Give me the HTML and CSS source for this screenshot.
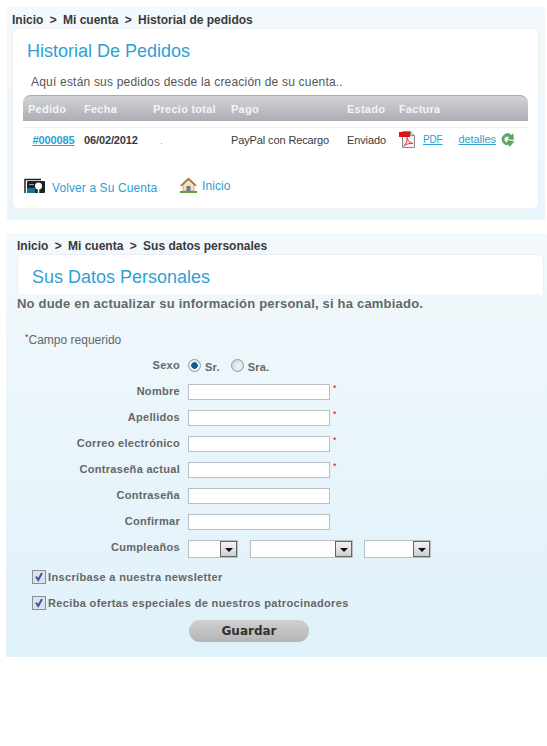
FILE: index.html
```html
<!DOCTYPE html>
<html lang="es">
<head>
  <meta charset="UTF-8" />
  <title>Mi cuenta</title>
  <link rel="stylesheet" href="styles.css">
</head>
<body>
  <section class="block orders">
    <div class="crumbs">Inicio <b>&gt;</b> Mi cuenta <b>&gt;</b> Historial de pedidos</div>
    <div class="card">
      <h1>Historial De Pedidos</h1>
      <p class="intro">Aquí están sus pedidos desde la creación de su cuenta..</p>

      <table class="order-table">
        <thead>
          <tr>
            <th class="c-id">Pedido</th>
            <th class="c-date">Fecha</th>
            <th class="c-price">Precio total</th>
            <th class="c-pay">Pago</th>
            <th class="c-state">Estado</th>
            <th class="c-bill">Factura</th>
          </tr>
        </thead>
        <tbody>
          <tr class="gap"><td colspan="6"></td></tr>
          <tr>
            <td class="order-no"><a href="#">#000085</a></td>
            <td class="order-date">06/02/2012</td>
            <td><span class="speck"></span></td>
            <td>PayPal con Recargo</td>
            <td>Enviado</td>
            <td>
              <div class="bill">
                <svg class="pdf-icon" width="17" height="17" viewBox="0 0 17 17">
                  <path d="M3.500 .5H11.500L15.500 4.500V16.500H3.500Z" fill="#f4f4f4" stroke="#8a8a8a"/>
                  <path d="M11.500 .5V4.500H15.500" fill="#d8d8d8" stroke="#8a8a8a"/>
                  <path d="M0 1H11V6H0Z" fill="#d8141a"/>
                  <path d="M4.500 15C7.500 13 8.500 9 8 6.500 8.500 9.500 10.500 12 14 12.500 10.500 12 7.500 13 4.500 15Z" fill="none" stroke="#e2363b"/>
                </svg>
                <a class="pdf-link" href="#">PDF</a>
                <a class="more-link" href="#">detalles</a>
                <svg class="redo-icon" width="13" height="15" viewBox="0 0 13 15">
                  <path d="M10.500 3.500A5.500 5.500 0 1 0 8 12.500L8.500 14.500 13 9.500 6.500 8.500 7 10.300A3 3 0 1 1 8.500 5.500L7 7 12.500 7.500 12 2Z" fill="#5fa862" stroke="#3f8a48" stroke-width=".5"/>
                </svg>
              </div>
            </td>
          </tr>
        </tbody>
      </table>

      <div class="card-links">
        <a class="account-link" href="#">
          <svg width="22" height="17" viewBox="0 0 22 17">
            <path d="M1 15V1.500H17" fill="none" stroke="#222" stroke-width="1.500"/>
            <rect x="3" y="3" width="18" height="12" rx="1" fill="#1d2226"/>
            <rect x="3" y="10" width="8" height="5" fill="#1f6f93"/>
            <rect x="5" y="6" width="5" height="1" fill="#9aa"/>
            <circle cx="14.500" cy="8" r="3.500" fill="#fff"/>
            <path d="M14.500 11V16.500M11 16.500H18" stroke="#fff" stroke-width="1.500"/>
          </svg>
          Volver a Su Cuenta
        </a>
        <a class="home-link" href="#">
          <svg width="17" height="16" viewBox="0 0 17 16">
            <path d="M3 8V14H14V8L8.500 2.500Z" fill="#f1e2c4" stroke="#b59a6a" stroke-width=".7"/>
            <path d="M0 8.500 8.500 .5 17 8.500 15 9 8.500 3 2 9Z" fill="#a8743a"/>
            <rect x="6.500" y="9" width="4" height="5" fill="#6f7a80"/>
            <rect x="0" y="14" width="17" height="2" fill="#5f9d46"/>
          </svg>
          Inicio
        </a>
      </div>
    </div>
  </section>

  <section class="block details">
    <div class="crumbs">Inicio <b>&gt;</b> Mi cuenta <b>&gt;</b> Sus datos personales</div>
    <div class="card card-top">
      <h1>Sus Datos Personales</h1>
    </div>
    <p class="lead">No dude en actualizar su información personal, si ha cambiado.</p>

    <form class="account-form">
      <p class="required-note"><i>*</i>Campo requerido</p>

      <div class="row row-sex">
        <label>Sexo</label>
        <div class="radios">
          <input type="radio" name="sexo" checked><span>Sr.</span>
          <input type="radio" name="sexo"><span>Sra.</span>
        </div>
      </div>
      <div class="row">
        <label for="nombre">Nombre</label>
        <input class="field" type="text" id="nombre"><i class="req">*</i>
      </div>
      <div class="row">
        <label for="apellidos">Apellidos</label>
        <input class="field" type="text" id="apellidos"><i class="req">*</i>
      </div>
      <div class="row">
        <label for="correo">Correo electrónico</label>
        <input class="field" type="text" id="correo"><i class="req">*</i>
      </div>
      <div class="row">
        <label for="actual">Contraseña actual</label>
        <input class="field" type="password" id="actual"><i class="req">*</i>
      </div>
      <div class="row">
        <label for="clave">Contraseña</label>
        <input class="field" type="password" id="clave">
      </div>
      <div class="row">
        <label for="confirmar">Confirmar</label>
        <input class="field" type="password" id="confirmar">
      </div>
      <div class="row row-date">
        <label>Cumpleaños</label>
        <div class="select sel-day"><span class="arrow"></span></div>
        <div class="select sel-month"><span class="arrow"></span></div>
        <div class="select sel-year"><span class="arrow"></span></div>
      </div>

      <div class="check-row first">
        <svg width="14" height="14" viewBox="0 0 14 14">
          <rect x=".5" y=".5" width="13" height="13" fill="#dfe3e6" stroke="#8a8f94"/>
          <path d="M4 6.500 6.200 10 10 3" fill="none" stroke="#3b55b5" stroke-width="2"/>
        </svg>
        <span>Inscríbase a nuestra newsletter</span>
      </div>
      <div class="check-row">
        <svg width="14" height="14" viewBox="0 0 14 14">
          <rect x=".5" y=".5" width="13" height="13" fill="#dfe3e6" stroke="#8a8f94"/>
          <path d="M4 6.500 6.200 10 10 3" fill="none" stroke="#3b55b5" stroke-width="2"/>
        </svg>
        <span>Reciba ofertas especiales de nuestros patrocinadores</span>
      </div>

      <button class="save-btn" type="submit">Guardar</button>
    </form>
  </section>
</body>
</html>
```

FILE: styles.css
```css
body {
  margin: 0;
  font-family: "Liberation Sans", Arial, sans-serif;
  font-size: 12px;
  color: #333;
  background: #fff;
}

a {
  color: #2c9fd3;
}

.block {
  box-sizing: border-box;
}

.orders {
  margin: 7px 2px 0 7px;
  height: 213px;
  padding: 0 6px 0 5px;
  background: linear-gradient(#f3f9fc, #e9f5fb);
}

.details {
  margin: 13px 0 0 6px;
  height: 424px;
  padding: 0 3px 0 11px;
  background: linear-gradient(#f3f9fc, #dff1fa);
}

.crumbs {
  height: 21px;
  line-height: 27px;
  font-weight: bold;
  font-size: 12px;
  color: #3a3a3a;
  white-space: nowrap;
}

.crumbs b {
  margin: 0 3px;
}

.card {
  box-sizing: border-box;
  height: 181px;
  background: #fff;
  border: 1px solid #eeeef2;
  border-radius: 6px;
}

.card-top {
  height: 40px;
  border-bottom: none;
  border-radius: 6px 6px 0 0;
}

h1 {
  margin: 12px 0 0 14px;
  font-size: 18px;
  font-weight: normal;
  line-height: 21px;
  color: #2f9fd4;
}

.intro {
  margin: 12px 0 0 18px;
  line-height: 16px;
  letter-spacing: .2px;
  color: #555;
}

.order-table {
  width: 505px;
  margin: 5px 0 0 10px;
  border-collapse: separate;
  border-spacing: 0;
  table-layout: fixed;
}

.order-table th {
  box-sizing: border-box;
  height: 26px;
  padding: 0 0 0 5px;
  text-align: left;
  font-size: 11px;
  color: #f4f4f6;
  letter-spacing: .25px;
  background: linear-gradient(#d2d3d7, #adaeb3);
  border-top: 1px solid #aaa;
}

.order-table th.c-id {
  border-radius: 8px 0 0 0;
}

.order-table th.c-bill {
  border-radius: 0 8px 0 0;
}

.c-id { width: 56px; }
.c-date { width: 69px; }
.c-price { width: 78px; }
.c-pay { width: 116px; }
.c-state { width: 52px; }

.order-table td {
  height: 23px;
  padding: 0 0 2px 5px;
  font-size: 11px;
  letter-spacing: -.12px;
  color: #3a3a3a;
  border-top: 1px solid #eee;
}

.order-table .gap td {
  height: 6px;
  padding: 0;
  border-top: none;
}

.order-no {
  font-weight: bold;
  text-align: center;
}

.order-date {
  font-weight: bold;
  color: #222;
}

.speck {
  display: inline-block;
  width: 1px;
  height: 1px;
  margin: 9px 0 0 8px;
  background: #e0a050;
}

.bill {
  display: flex;
  align-items: center;
}

.bill svg {
  flex-shrink: 0;
}

.pdf-link {
  margin: -1px 0 0 7px;
  font-size: 10px;
  letter-spacing: -.2px;
}

.more-link {
  margin: -2px 0 0 16px;
  letter-spacing: -.05px;
}

.redo-icon {
  margin-left: 5px;
}

.card-links {
  display: flex;
  align-items: flex-end;
  margin: 24px 0 0 11px;
  font-size: 12px;
}

.card-links a {
  display: flex;
  align-items: flex-end;
  text-decoration: none;
  letter-spacing: .1px;
}

.account-link {
  width: 156px;
}

.account-link svg {
  margin-right: 6px;
}

.home-link {
  margin-bottom: 2px;
}

.home-link svg {
  margin-right: 5px;
}

.lead {
  margin: 2px 0 0;
  font-weight: bold;
  font-size: 13px;
  line-height: 16px;
  letter-spacing: .2px;
  color: #666;
}

.required-note {
  margin: 20px 0 0 8px;
  line-height: 16px;
  color: #666;
}

.required-note i {
  font-style: normal;
  font-size: 9px;
  line-height: 9px;
  vertical-align: 4px;
  color: #e00;
}

.req {
  align-self: flex-start;
  margin: 6px 0 0 3px;
  font-size: 9px;
  font-style: normal;
  line-height: 9px;
  color: #e00;
}

.row {
  display: flex;
  align-items: center;
  height: 26px;
}

.row-sex {
  margin-top: 4px;
}

.row label {
  width: 163px;
  margin-right: 8px;
  text-align: right;
  font-size: 11px;
  font-weight: bold;
  letter-spacing: .3px;
  color: #666;
}

.radios {
  display: flex;
  align-items: center;
  font-size: 11px;
  font-weight: bold;
  letter-spacing: .2px;
  color: #666;
}

.radios input {
  appearance: none;
  box-sizing: border-box;
  width: 13px;
  height: 13px;
  margin: 0 4px 0 0;
  border: 1px solid #8a9aa5;
  border-radius: 50%;
  background: radial-gradient(circle at 60% 60%, #f4f4f4, #cfd2d4);
}

.radios input:checked {
  background: radial-gradient(circle, #0a5f95 0 3px, #eee 3.5px);
}

.radios span {
  margin: 3px 11px 0 0;
}

.field {
  box-sizing: border-box;
  width: 142px;
  height: 16px;
  margin-top: 2px;
  padding: 0;
  border: 1px solid #b8bec4;
  background: #fff;
  outline: none;
}

.select {
  box-sizing: border-box;
  display: flex;
  justify-content: flex-end;
  height: 18px;
  margin-top: 4px;
  border: 1px solid #b8bec4;
  background: #fff;
}

.sel-day { width: 50px; margin-right: 12px; }
.sel-month { width: 103px; margin-right: 11px; }
.sel-year { width: 67px; }

.arrow {
  box-sizing: border-box;
  position: relative;
  width: 17px;
  height: 16px;
  border: 1px solid #666;
  background: linear-gradient(#f4f4f4, #cfcfcf);
}

.arrow::after {
  content: "";
  position: absolute;
  left: 4px;
  top: 6px;
  border: 4px solid transparent;
  border-top-color: #111;
  border-bottom: none;
}

.check-row {
  display: flex;
  align-items: center;
  height: 26px;
  margin-left: 15px;
  font-size: 11px;
  font-weight: bold;
  letter-spacing: .35px;
  color: #666;
}

.check-row.first {
  margin-top: 4px;
}

.check-row svg {
  margin-right: 2px;
}

.save-btn {
  display: block;
  width: 120px;
  height: 22px;
  margin: 4px 0 0 172px;
  padding: 0;
  border: none;
  border-radius: 11px;
  background: linear-gradient(#d0d0d0, #b4b4b4);
  font-family: "DejaVu Sans", sans-serif;
  font-size: 12px;
  font-weight: bold;
  color: #333;
}
```
